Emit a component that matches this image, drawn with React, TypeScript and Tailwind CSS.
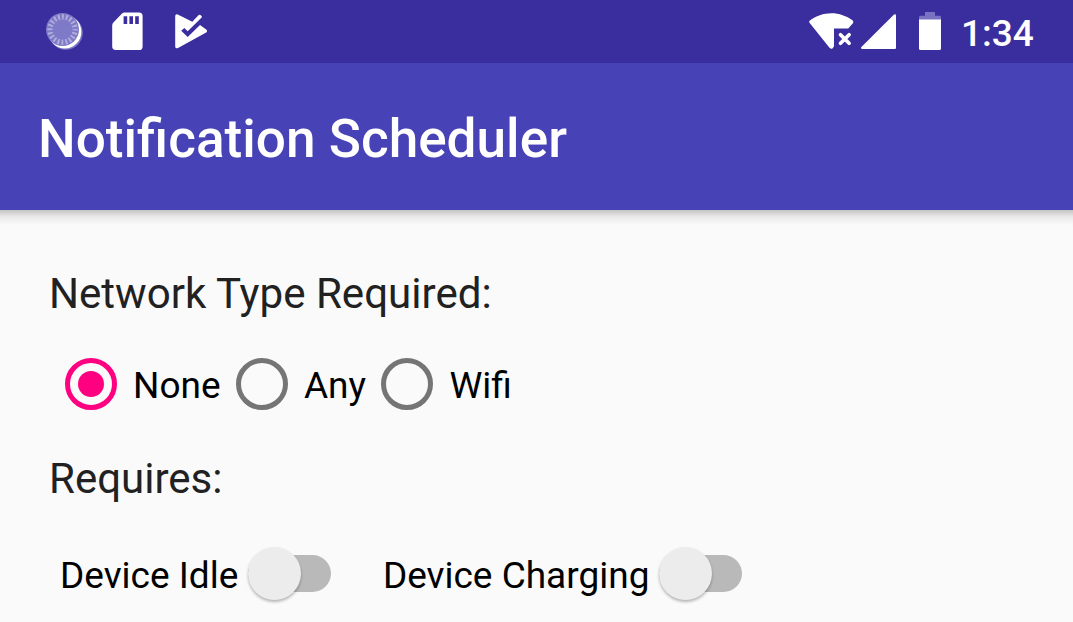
import { useState } from "react";

function SpinnerIcon() {
  return (
    <svg width="40" height="40" viewBox="0 0 40 40" className="shrink-0">
      <circle cx="19.800" cy="20.800" r="17" fill="#7d76c4" />
      <circle cx="18.800" cy="19.800" r="16.600" fill="#fff" />
      <circle cx="16.500" cy="17.500" r="16.500" fill="#7f7ac8" />
      <circle
        cx="16.500"
        cy="17.500"
        r="12.600"
        fill="none"
        stroke="#b2aedd"
        strokeWidth="5.200"
        strokeDasharray="1.800 2.158"
        strokeDashoffset=".9"
      />
    </svg>
  );
}

function SdCardIcon() {
  return (
    <svg width="31" height="38" viewBox="0 0 31 38" className="shrink-0">
      <path
        fill="#fff"
        fillRule="evenodd"
        d="M12.600 .4H27a3.600 3.600 0 0 1 3.600 3.600V34.400a3.600 3.600 0 0 1-3.600 3.600H3.600A3.600 3.600 0 0 1 .2 34.400V13.500Q.2 11.700 1.400 10.500L10 1.600Q11.100 .4 12.600 .4zM11.600 4.300v7.700h3.600V4.300zM17.400 4.300v7.700h3.600V4.300zM23.200 4.300v7.700h3.600V4.300z"
      />
    </svg>
  );
}

function PlayCheckIcon() {
  return (
    <svg width="34" height="36" viewBox="0 0 34 36" className="shrink-0">
      <path
        fill="#fff"
        d="M.2 2.300Q.3-.3 2.700 .6L17.300 7.800 23.700 1.100Q24.600 .2 25.500 1.100L26.500 2.100Q27.200 2.900 26.400 3.700L12.700 17.300 9.300 13.900 6.200 16.800 12.700 23 25 11 31.200 15.400Q33 17 31.200 18.500L3 34.100Q.4 35 .2 32.400z"
      />
    </svg>
  );
}

function WifiOffIcon() {
  return (
    <svg width="46" height="38" viewBox="0 0 46 38" className="shrink-0">
      <path
        fill="#fff"
        d="M.6 7.800C7 2.900 14.500 .2 22.300 .2S37.600 2.900 43.400 7.200Q44.900 8.500 43.900 10.200L39.200 15.400H25V33.300L23.700 35.200Q22.200 36.400 20.700 34.900L.7 10.100Q-.3 8.800 .6 7.800z"
      />
      <path d="M31.500 21.700 40.100 30.300M40.100 21.700 31.500 30.300" stroke="#fff" strokeWidth="3.700" strokeLinecap="round" />
    </svg>
  );
}

function SignalIcon() {
  return (
    <svg width="36" height="36" viewBox="0 0 36 36" className="shrink-0">
      <path d="M33 .4Q35-.4 35 1.600V34Q35 35.100 33.800 35.100H1.300Q-.7 34.600 .4 32.900z" fill="#fff" />
    </svg>
  );
}

function BatteryIcon() {
  return (
    <svg width="22" height="38" viewBox="0 0 22 38" className="shrink-0">
      <path d="M6 0H16V3.800H20.500Q22 3.800 22 5.300V8H0V5.300Q0 3.800 1.500 3.800H6z" fill="#7a72c0" />
      <path d="M0 7.500H22V36.500Q22 38 20.500 38H1.500Q0 38 0 36.500z" fill="#fff" />
    </svg>
  );
}

function StatusBar() {
  return (
    <div className="flex h-[63px] items-start bg-[#3a2e9e] text-white">
      <div className="flex pt-3 pl-[46px]">
        <SpinnerIcon />
        <div className="ml-[26px]">
          <SdCardIcon />
        </div>
        <div className="mt-[2px] ml-[32px]">
          <PlayCheckIcon />
        </div>
      </div>
      <div className="ml-auto flex pr-[39px]">
        <div className="pt-[13px]">
          <WifiOffIcon />
        </div>
        <div className="ml-[6px] pt-[14px]">
          <SignalIcon />
        </div>
        <div className="ml-[22px] pt-3">
          <BatteryIcon />
        </div>
        <span className="ml-[20px] w-[73px] pt-[9px] text-[37px] leading-[50px] font-medium whitespace-nowrap">1:34</span>
      </div>
    </div>
  );
}

function Radio({ label, checked, onSelect }: { label: string; checked: boolean; onSelect: () => void }) {
  return (
    <button type="button" role="radio" aria-checked={checked} onClick={onSelect} className="flex h-[52px] items-center">
      <span
        className={
          checked
            ? "flex size-[52px] items-center justify-center rounded-full border-5 border-[#ff0080]"
            : "flex size-[52px] items-center justify-center rounded-full border-5 border-[#757575]"
        }
      >
        {checked && <span className="size-[26px] rounded-full bg-[#ff0080]" />}
      </span>
      <span className="pt-[3px] pl-[16px] text-[37px] leading-[50px]">{label}</span>
    </button>
  );
}

function Switch({ label, on, onToggle }: { label: string; on: boolean; onToggle: () => void }) {
  return (
    <button type="button" role="switch" aria-checked={on} onClick={onToggle} className="flex h-[53px] items-center">
      <span className="pt-[5px] text-[37px] leading-[50px] whitespace-nowrap">{label}</span>
      <span className="ml-[9.600px] flex h-[53px] w-[83px] items-center">
        <span
          className={
            on
              ? "flex h-[37px] w-[83px] items-center justify-end rounded-full bg-[#ff80bf]"
              : "flex h-[37px] w-[83px] items-center rounded-full bg-[#b9b9b9]"
          }
        >
          <span className="size-[53px] shrink-0 rounded-full bg-[#ececec] shadow-[0_2px_3px_rgba(0,0,0,0.28)]" />
        </span>
      </span>
    </button>
  );
}

const networks = ["None", "Any", "Wifi"];

export default function App() {
  const [network, setNetwork] = useState("None");
  const [idle, setIdle] = useState(false);
  const [charging, setCharging] = useState(false);

  return (
    <div className="flex h-[622px] w-[1073px] flex-col overflow-hidden bg-[#fafafa] font-['Roboto',sans-serif] text-black">
      <StatusBar />
      <header className="flex h-[147px] shrink-0 items-center bg-[#4742b5] pt-[5px] pl-[38px]">
        <h1 className="text-[53.150px] leading-[64px] font-medium text-white">Notification Scheduler</h1>
      </header>
      <div className="h-[15px] shrink-0 bg-linear-to-b from-[#c4c4c4] via-[#e9e9e9] via-45% to-[#fafafa]" />
      <main className="flex flex-col pt-[44px] pl-[49px]">
        <h2 className="text-[42.100px] leading-[50px] text-[#212121]">Network Type Required:</h2>
        <div role="radiogroup" className="mt-[39px] flex gap-[15.400px] pl-[16px]">
          {networks.map((name) => (
            <Radio key={name} label={name} checked={network === name} onSelect={() => setNetwork(name)} />
          ))}
        </div>
        <h2 className="mt-[44px] text-[42px] leading-[50px] text-[#212121]">Requires:</h2>
        <div className="mt-[43px] flex gap-[52px] pl-[11px]">
          <Switch label="Device Idle" on={idle} onToggle={() => setIdle(!idle)} />
          <Switch label="Device Charging" on={charging} onToggle={() => setCharging(!charging)} />
        </div>
      </main>
    </div>
  );
}
